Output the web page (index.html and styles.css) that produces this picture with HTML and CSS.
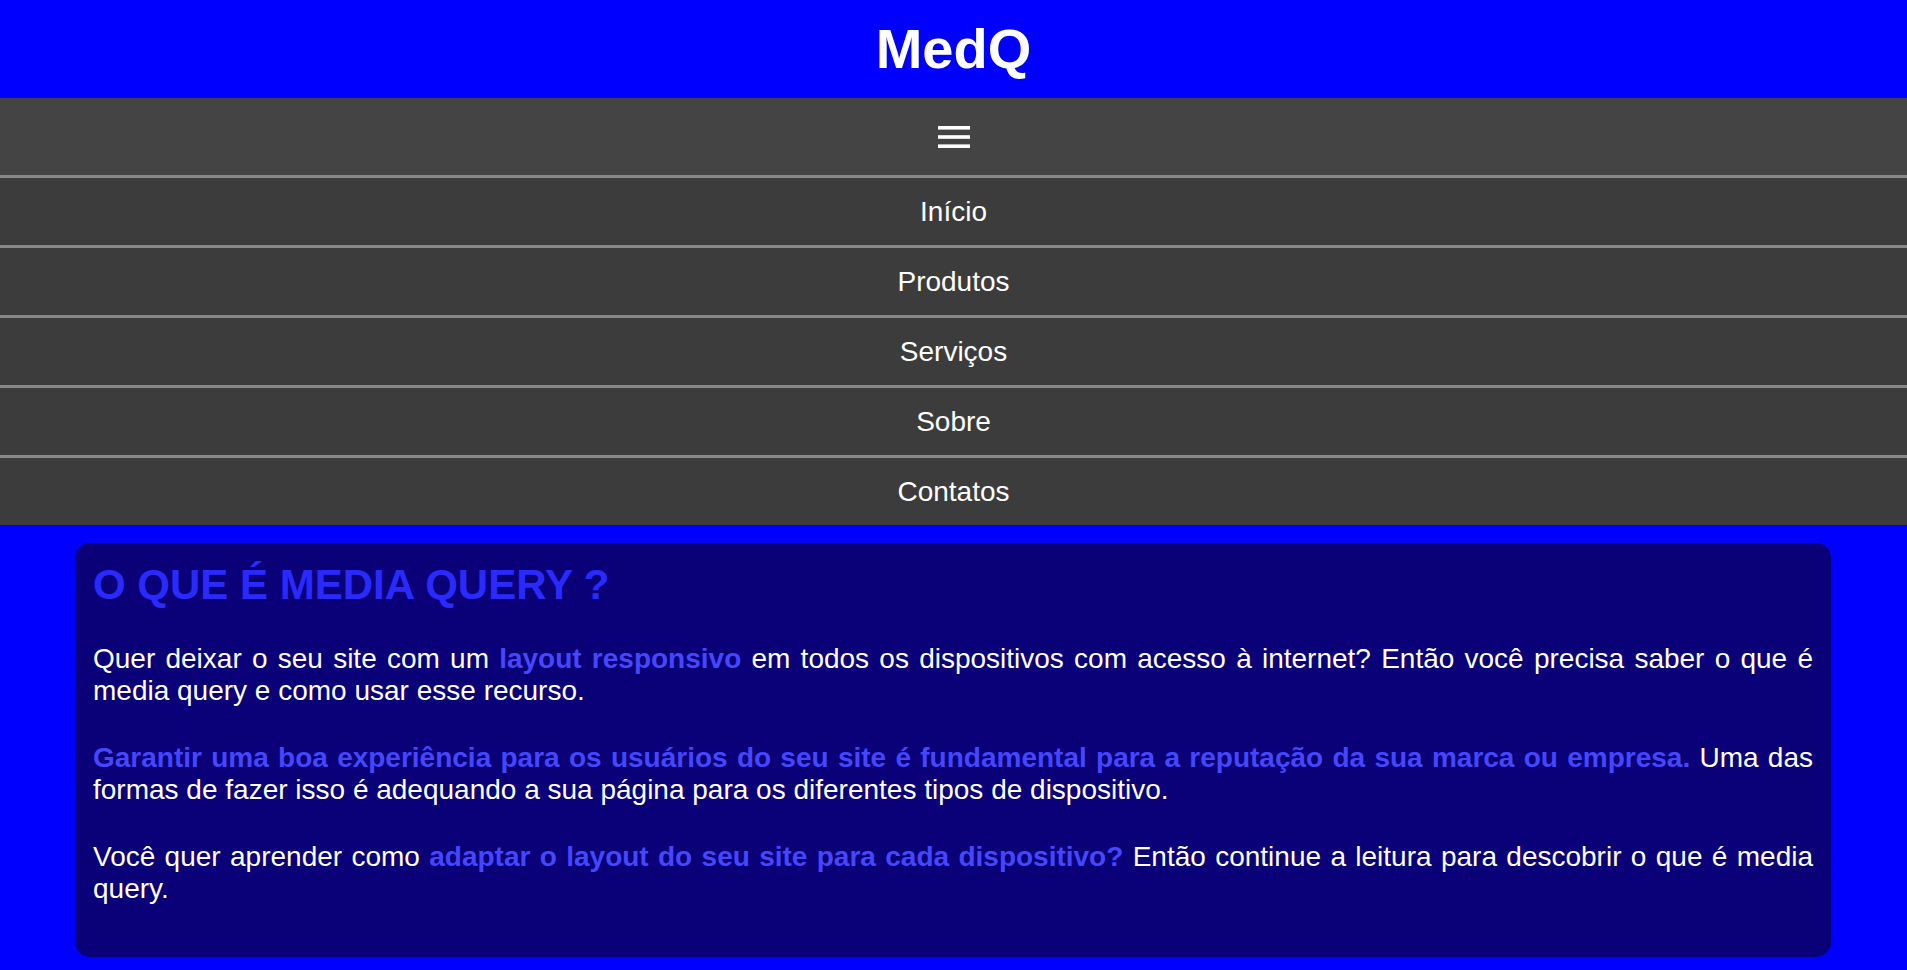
FILE: index.html
```html
<!DOCTYPE html>
<html lang="pt-BR">
<head>
<meta charset="utf-8">
<title>MedQ</title>
<link rel="stylesheet" href="styles.css">
</head>
<body>
<header class="site-header">
  <h1 class="logo">MedQ</h1>
</header>
<nav class="menu">
  <div class="menu-toggle">
    <svg class="menu-icon" width="32" height="22" viewBox="0 0 32 22" aria-hidden="true">
      <rect x="0" y="0" width="32" height="3.6" fill="#fff"/>
      <rect x="0" y="9.2" width="32" height="3.6" fill="#fff"/>
      <rect x="0" y="18.4" width="32" height="3.6" fill="#fff"/>
    </svg>
  </div>
  <ul class="menu-list">
    <li class="menu-item"><a href="#">Início</a></li>
    <li class="menu-item"><a href="#">Produtos</a></li>
    <li class="menu-item"><a href="#">Serviços</a></li>
    <li class="menu-item"><a href="#">Sobre</a></li>
    <li class="menu-item"><a href="#">Contatos</a></li>
  </ul>
</nav>
<main class="content">
  <section class="card">
    <h2 class="card-title">O QUE É MEDIA QUERY ?</h2>
    <p class="card-text">Quer deixar o seu site com um <strong class="hl">layout responsivo</strong> em todos os dispositivos com acesso à internet? Então você precisa saber o que é media query e como usar esse recurso.</p>
    <p class="card-text"><strong class="hl">Garantir uma boa experiência para os usuários do seu site é fundamental para a reputação da sua marca ou empresa.</strong> Uma das formas de fazer isso é adequando a sua página para os diferentes tipos de dispositivo.</p>
    <p class="card-text">Você quer aprender como <strong class="hl">adaptar o layout do seu site para cada dispositivo?</strong> Então continue a leitura para descobrir o que é media query.</p>
  </section>
</main>
</body>
</html>
```
FILE: styles.css
```css
* { box-sizing: border-box; }

body {
  margin: 0;
  background: #0000ff;
  font-family: "Liberation Sans", Arial, sans-serif;
  color: #fff;
}

.site-header {
  background: #0000ff;
  height: 98px;
  display: flex;
  align-items: center;
  justify-content: center;
  padding-bottom: 1px;
}

.logo {
  margin: 0;
  font-size: 56px;
  font-weight: bold;
  color: #fff;
}

.menu {
  background: #3c3c3c;
}

.menu-toggle {
  height: 77px;
  background: #444444;
  display: flex;
  align-items: center;
  justify-content: center;
}

.menu-icon { display: block; }

.menu-list {
  list-style: none;
  margin: 0;
  padding: 0;
}

.menu-item {
  border-top: 3px solid #888888;
}

.menu-item a {
  height: 67px;
  display: flex;
  align-items: center;
  justify-content: center;
  color: #fff;
  text-decoration: none;
  font-size: 28px;
}

.content {
  padding: 18px 0 13px;
}

.card {
  width: calc(100% - 151px);
  margin: 0 76px 0 75px;
  background: #0a0078;
  border-radius: 15px;
  padding: 18px 18px 15.5px;
}

.card-title {
  margin: 0 0 34px;
  font-size: 42px;
  font-weight: bold;
  color: #2a2aff;
}

.card-text {
  margin: 35px 0;
  font-size: 28px;
  text-align: justify;
}

.card-title + .card-text { margin-top: 34px; }

.card-text:last-child { margin-bottom: 36px; }

.hl {
  color: #4646ff;
  font-weight: bold;
}
```
